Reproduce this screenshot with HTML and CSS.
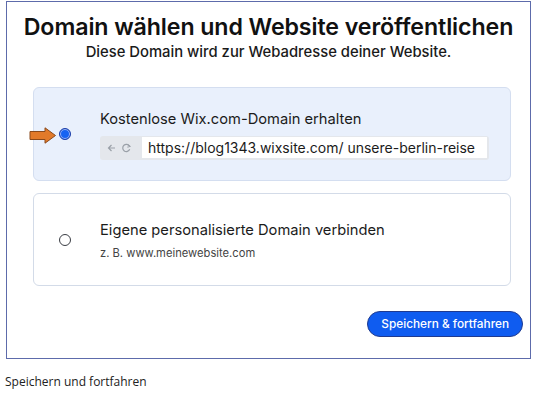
FILE: index.html
```html
<!DOCTYPE html>
<html lang="de">
<head>
    <meta charset="UTF-8">
    <meta name="viewport" content="width=device-width, initial-scale=1.0">
    <title>Domain wählen</title>
    <link rel="stylesheet" href="styles.css">
</head>
<body>
    <div class="frame">
        <div class="heading">
            <h1>Domain wählen und Website veröffentlichen</h1>
            <p>Diese Domain wird zur Webadresse deiner Website.</p>
        </div>

        <div class="option selected">
            <div class="radio-col">
                <span class="arrow">
                    <svg width="28" height="17" viewBox="0 0 28 17">
                        <path d="M1 4.5 H16 V0.8 L26.5 8.5 L16 16.2 V12.5 H1 Z" fill="#e27a2a" stroke="#8a4a1c" stroke-width="1"/>
                    </svg>
                </span>
                <span class="radio checked"></span>
            </div>
            <div class="option-body">
                <div class="option-title">Kostenlose Wix.com-Domain erhalten</div>
                <div class="urlbar">
                    <span class="nav">
                        <svg width="26" height="10" viewBox="0 0 26 10">
                            <path d="M8 5 H1.5 M4.5 2 L1.5 5 L4.5 8" fill="none" stroke="#9aa0a8" stroke-width="1.2"/>
                            <path d="M22.5 3.2 A3.6 3.6 0 1 0 22.7 6.3" fill="none" stroke="#9aa0a8" stroke-width="1.2"/>
                            <path d="M20.8 1.6 L23 3.4 L20.4 4.2" fill="none" stroke="#9aa0a8" stroke-width="1.1"/>
                        </svg>
                    </span>
                    <span class="url">https://blog1343.wixsite.com/ unsere-berlin-reise</span>
                </div>
            </div>
        </div>

        <div class="option">
            <div class="radio-col">
                <span class="radio"></span>
            </div>
            <div class="option-body">
                <div class="option-title">Eigene personalisierte Domain verbinden</div>
                <div class="option-hint">z. B. www.meinewebsite.com</div>
            </div>
        </div>

        <div class="actions">
            <button type="button">Speichern &amp; fortfahren</button>
        </div>
    </div>
    <div class="caption">Speichern und fortfahren</div>
</body>
</html>
```

FILE: styles.css
```css
/* Basic Styles */
body {
    margin: 0;
    background: #fff;
    font-family: Inter, "Noto Sans", sans-serif;
    color: #161616;
}
.frame {
    margin: 1px 0 0 6px;
    width: 523px;
    height: 356px;
    border: 1px solid #5d6bab;
    box-sizing: content-box;
    display: flex;
    flex-direction: column;
}

/* Heading */
.heading {
    text-align: center;
    padding-top: 10px;
}
.heading h1 {
    margin: 0;
    font-size: 23.2px;
    font-weight: 600;
    letter-spacing: -0.1px;
    line-height: 30px;
    color: #111;
}
.heading p {
    margin: 0;
    font-size: 14.8px;
    font-weight: 500;
    line-height: 20px;
    color: #1a1a1a;
}

/* Options */
.option {
    margin: 0 19px 0 26px;
    height: 93px;
    border: 1px solid #d3dbe8;
    border-radius: 6px;
    background: #fff;
    display: flex;
    align-items: center;
    box-sizing: border-box;
}
.option.selected {
    margin-top: 25px;
    margin-bottom: 12px;
    background: #e9f0fc;
    border-color: #d4def0;
    height: 94px;
}
.radio-col {
    width: 66px;
    display: flex;
    align-items: center;
    padding-left: 25px;
    box-sizing: border-box;
    position: relative;
}
.arrow {
    position: absolute;
    left: -5px;
    top: -1px;
    display: flex;
}
.radio {
    width: 10px;
    height: 10px;
    border: 1.5px solid #3a3d44;
    border-radius: 50%;
    background: #fff;
}
.radio.checked {
    border-color: #1e3fa8;
    background: #1663f2;
    box-shadow: inset 0 0 0 1px #9fb8f6;
}
.option-body {
    display: flex;
    flex-direction: column;
}
.option-title {
    font-size: 14.7px;
    line-height: 20px;
    color: #1b1b1b;
}
.option-hint {
    margin-top: 6px;
    font-size: 11.2px;
    color: #444;
}

/* URL bar */
.urlbar {
    margin-top: 7px;
    width: 389px;
    height: 24px;
    background: #e4e7ec;
    border-radius: 3px;
    display: flex;
    align-items: center;
    padding: 0 2px 0 7px;
    box-sizing: border-box;
}
.nav {
    display: flex;
    width: 35px;
}
.url {
    flex: 1;
    height: 21px;
    background: #fff;
    font-size: 14px;
    line-height: 21px;
    padding-left: 6px;
    color: #1b1b1b;
    white-space: nowrap;
}

/* Button */
.actions {
    display: flex;
    justify-content: flex-end;
    padding: 25px 7px 0 0;
}
button {
    height: 26px;
    padding: 0 13px;
    font-family: Inter, sans-serif;
    font-size: 11.8px;
    font-weight: 500;
    color: #fff;
    background: #0f5cf0;
    border: 1px solid #1f3a8f;
    border-radius: 13px;
    cursor: pointer;
}

.caption {
    margin: 14px 0 0 5px;
    font-family: "Open Sans", sans-serif;
    font-size: 12px;
    color: #222;
}
```
